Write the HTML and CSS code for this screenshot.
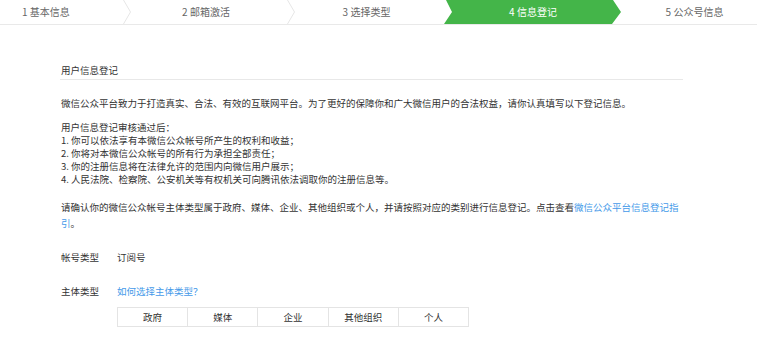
FILE: index.html
```html
<!DOCTYPE html>
<html lang="zh-CN">
<head>
<meta charset="utf-8">
<title>信息登记</title>
<link rel="stylesheet" href="styles.css">
</head>
<body>
<div class="steps">
  <div class="step step-1">1 基本信息</div>
  <svg class="sep" width="8" height="24" viewBox="0 0 8 24"><path d="M0.5 0 L7.5 12 L0.5 24" fill="none" stroke="#e6e6e6" stroke-width="1"/></svg>
  <div class="step step-2">2 邮箱激活</div>
  <svg class="sep" width="8" height="24" viewBox="0 0 8 24"><path d="M0.5 0 L7.5 12 L0.5 24" fill="none" stroke="#e6e6e6" stroke-width="1"/></svg>
  <div class="step step-3">3 选择类型</div>
  <div class="step step-4 active">4 信息登记</div>
  <div class="step step-5">5 公众号信息</div>
</div>

<div class="content">
  <h2 class="section-title">用户信息登记</h2>
  <p class="intro">微信公众平台致力于打造真实、合法、有效的互联网平台。为了更好的保障你和广大微信用户的合法权益，请你认真填写以下登记信息。</p>
  <div class="rules">
    <p>用户信息登记审核通过后：</p>
    <p>1. 你可以依法享有本微信公众帐号所产生的权利和收益；</p>
    <p>2. 你将对本微信公众帐号的所有行为承担全部责任；</p>
    <p>3. 你的注册信息将在法律允许的范围内向微信用户展示；</p>
    <p>4. 人民法院、检察院、公安机关等有权机关可向腾讯依法调取你的注册信息等。</p>
  </div>
  <p class="notice">请确认你的微信公众帐号主体类型属于政府、媒体、企业、其他组织或个人，并请按照对应的类别进行信息登记。点击查看<a class="link" href="#">微信公众平台信息登记指引</a>。</p>

  <div class="form-row">
    <span class="label">帐号类型</span>
    <span class="value">订阅号</span>
  </div>
  <div class="form-row type-row">
    <span class="label">主体类型</span>
    <div class="value">
      <a class="link" href="#">如何选择主体类型？</a>
    </div>
  </div>
  <div class="type-table">
    <div class="cell">政府</div>
    <div class="cell">媒体</div>
    <div class="cell">企业</div>
    <div class="cell">其他组织</div>
    <div class="cell">个人</div>
  </div>
</div>
</body>
</html>
```

FILE: styles.css
```css
* { box-sizing: border-box; }
body {
  margin: 0;
  background: #fff;
  font-family: "Noto Sans CJK SC", "Noto Sans", sans-serif;
  color: #333;
}
.steps {
  display: flex;
  height: 25px;
  border-bottom: 1px solid #e9e9e9;
}
.step {
  height: 24px;
  line-height: 24px;
  font-size: 10px;
  color: #666;
  text-align: center;
  flex: none;
}
.sep { flex: none; display: block; }
.step-1 { width: 123px; text-align: left; padding-left: 22px; }
.step-2 { width: 156px; padding-right: 6px; }
.step-3 { width: 149px; padding-right: 6px; }
.step-4 { width: 178px; }
.step-5 { width: 135px; padding-left: 10px; }
.step.active {
  background: #44b549;
  color: #fff;
  clip-path: polygon(2px 0, 169px 0, 177px 12px, 168px 24px, 0 24px, 8px 12px);
}
.content {
  margin-left: 61px;
  width: 622px;
  font-size: 9.5px;
  color: #333;
}
.content p { margin: 0; }
.section-title {
  margin: 38px 0 0 -1px;
  padding: 0 0 2px 1px;
  font-size: 9.5px;
  font-weight: normal;
  line-height: 14px;
  border-bottom: 1px solid #e8e8e8;
}
.intro {
  margin-top: 16px !important;
  line-height: 14px;
}
.rules {
  margin-top: 11px;
  line-height: 13px;
}
.notice {
  margin-top: 13px !important;
  line-height: 16px;
}
.link { color: #459ae9; text-decoration: none; }
.form-row {
  display: flex;
  line-height: 14px;
  margin-top: 19px;
}
.type-row { margin-top: 20px; }
.label { width: 56px; flex: none; color: #333; }
.value { color: #333; }
.type-table {
  display: flex;
  margin: 9px 0 0 56px;
  width: 352px;
  border: 1px solid #e4e4e4;
}
.cell {
  flex: 1;
  height: 18px;
  line-height: 18px;
  text-align: center;
  color: #333;
  border-left: 1px solid #e4e4e4;
}
.cell:first-child { border-left: none; }
```
